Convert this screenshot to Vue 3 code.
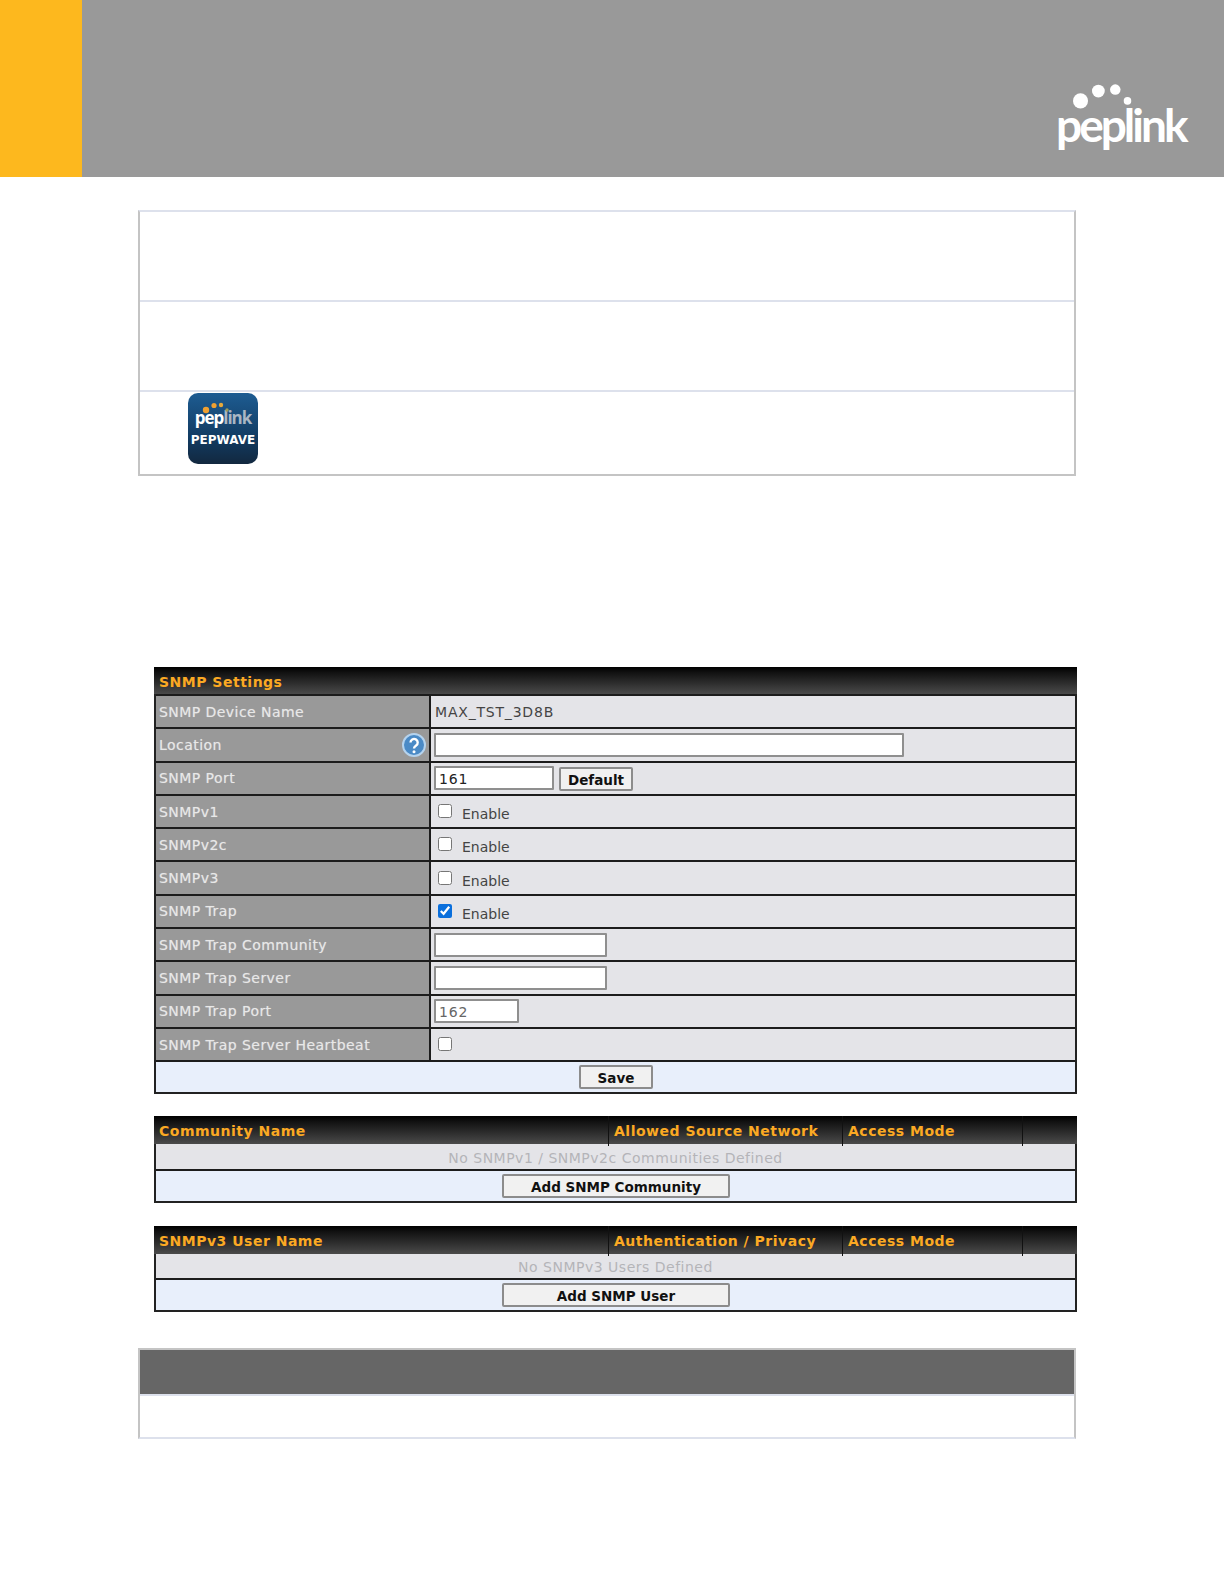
<script setup>
const rows = [
  { label: 'SNMP Device Name', kind: 'text', value: 'MAX_TST_3D8B' },
  { label: 'Location', kind: 'location' },
  { label: 'SNMP Port', kind: 'port' },
  { label: 'SNMPv1', kind: 'check', text: 'Enable' },
  { label: 'SNMPv2c', kind: 'check', text: 'Enable' },
  { label: 'SNMPv3', kind: 'check', text: 'Enable' },
  { label: 'SNMP Trap', kind: 'check', text: 'Enable', checked: true },
  { label: 'SNMP Trap Community', kind: 'input' },
  { label: 'SNMP Trap Server', kind: 'input' },
  { label: 'SNMP Trap Port', kind: 'trap' },
  { label: 'SNMP Trap Server Heartbeat', kind: 'check' }
]
const lists = [
  { head: ['Community Name', 'Allowed Source Network', 'Access Mode', ''], empty: 'No SNMPv1 / SNMPv2c Communities Defined', action: 'Add SNMP Community' },
  { head: ['SNMPv3 User Name', 'Authentication / Privacy', 'Access Mode', ''], empty: 'No SNMPv3 Users Defined', action: 'Add SNMP User' }
]
</script>

<template>
  <div class="page">
    <header class="banner">
      <div class="accent"></div>
      <div class="brand">
        <svg class="dots" viewBox="0 0 66 36" aria-hidden="true">
          <circle cx="8" cy="20" r="8" fill="#fff" />
          <circle cx="27" cy="9.500" r="6.800" fill="#fff" />
          <circle cx="45" cy="8" r="5.600" fill="#fff" />
          <circle cx="58" cy="20" r="4" fill="#fff" />
        </svg>
        <span class="wordmark">peplink</span>
      </div>
    </header>

    <main class="content">
      <section class="note-box">
        <div class="note-row"></div>
        <div class="note-row"></div>
        <div class="note-row last">
          <div class="app-icon">
            <svg class="app-dots" viewBox="0 0 28 14" aria-hidden="true">
              <circle cx="4" cy="9" r="3.200" fill="#f0a030" />
              <circle cx="12" cy="4.500" r="2.600" fill="#f0a030" />
              <circle cx="19" cy="4" r="2.200" fill="#e6a83a" />
              <circle cx="25" cy="9" r="1.700" fill="#9a9a5a" />
            </svg>
            <div class="app-name"><span class="app-pep">pep</span><span class="app-link">link</span></div>
            <div class="app-wave">PEPWAVE</div>
          </div>
        </div>
      </section>

      <section class="panel settings">
        <div class="bar">SNMP Settings</div>
        <div v-for="row in rows" :key="row.label" class="row">
          <div class="label">
            <span>{{ row.label }}</span>
            <svg v-if="row.kind === 'location'" class="help" viewBox="0 0 24 24" aria-hidden="true">
              <circle cx="12" cy="12" r="11" fill="#4a8ac6" stroke="#b5d3ee" stroke-width="2" />
              <path d="M8.500 9.500a3.600 3.600 0 1 1 5.600 3c-1.300.9-2.100 1.500-2.100 3" fill="none" stroke="#fff" stroke-width="2.400" />
              <circle cx="12" cy="18.700" r="1.500" fill="#fff" />
            </svg>
          </div>
          <div class="value">
            <span v-if="row.kind === 'text'" class="plain">{{ row.value }}</span>
            <input v-else-if="row.kind === 'location'" class="field wide" type="text" />
            <template v-else-if="row.kind === 'port'">
              <input class="field port" type="text" value="161" />
              <button class="btn default" type="button">Default</button>
            </template>
            <label v-else-if="row.kind === 'check'" class="check">
              <input type="checkbox" :checked="row.checked" />
              <span v-if="row.text">{{ row.text }}</span>
            </label>
            <input v-else-if="row.kind === 'input'" class="field medium" type="text" />
            <input v-else class="field small" type="text" value="162" />
          </div>
        </div>
        <div class="actions save-row"><button class="btn save" type="button">Save</button></div>
      </section>

      <section v-for="list in lists" :key="list.action" class="panel list">
        <div class="list-head">
          <div v-for="(h, i) in list.head" :key="i" class="list-cell">{{ h }}</div>
        </div>
        <div class="empty">{{ list.empty }}</div>
        <div class="actions add-row"><button class="btn add" type="button">{{ list.action }}</button></div>
      </section>

      <section class="foot-box">
        <div class="foot-head"></div>
        <div class="foot-body"></div>
      </section>
    </main>
  </div>
</template>

<style>
html, body { margin: 0; background: #fff; }
</style>

<style scoped>
.page {
  width: 1224px;
  height: 1584px;
  overflow: hidden;
  background: #fff;
  font-family: "DejaVu Sans", Verdana, sans-serif;
  font-size: 14px;
}
.banner {
  display: flex;
  justify-content: space-between;
  height: 177px;
  background: #999;
}
.accent { width: 82px; background: #fdb81e; }
.brand {
  display: flex;
  flex-direction: column;
  align-items: flex-start;
  width: 132px;
  margin: 82px 36px 0 0;
}
.dots { width: 62px; height: 34px; margin-left: 17px; }
.wordmark {
  margin-top: -18px;
  color: #fff;
  font-family: Lato, sans-serif;
  font-weight: 700;
  font-size: 46px;
  line-height: 54px;
  letter-spacing: -3px;
}
.content { padding: 33px 148px 0 138px; }
.note-box {
  display: flex;
  flex-direction: column;
  height: 266px;
  box-sizing: border-box;
  border: 2px solid #c4c4c4;
  border-top-color: #dde1ec;
}
.note-row {
  height: 90px;
  box-sizing: border-box;
  border-bottom: 2px solid #dde1ec;
}
.note-row.last {
  flex: 1;
  border-bottom: 0;
  padding: 1px 0 0 48px;
}
.app-icon {
  position: relative;
  width: 70px;
  height: 71px;
  border-radius: 10px;
  overflow: hidden;
  background: linear-gradient(#1d5c92, #123a60 65%, #12283f);
  text-align: center;
  color: #fff;
}
.app-dots { position: absolute; left: 14px; top: 8px; width: 28px; height: 14px; }
.app-name {
  margin-top: 14px;
  font-family: "Open Sans", sans-serif;
  font-weight: 700;
  font-size: 17px;
  line-height: 22px;
  letter-spacing: -1px;
}
.app-pep { color: #fff; }
.app-link { color: #a9b6c4; }
.app-wave {
  font-weight: 700;
  font-size: 12px;
  line-height: 22px;
}
.panel {
  box-sizing: border-box;
  margin: 0 -1px 0 16px;
  border: 2px solid #222;
  border-top: 0;
}
.settings { margin-top: 191px; height: 427px; display: flex; flex-direction: column; }
.bar, .list-head {
  margin: 0 -2px;
  background: linear-gradient(#000, #111 20%, #4a4a4a);
  color: #fba923;
  font-weight: 700;
  font-size: 14px;
  letter-spacing: 0.500px;
}
.bar {
  height: 27px;
  line-height: 30px;
  padding-left: 5px;
  box-sizing: border-box;
}
.row {
  display: grid;
  grid-template-columns: 275px 1fr;
  height: 33.300px;
  box-sizing: border-box;
  border-top: 2px solid #1c1c1c;
}
.label {
  display: flex;
  align-items: center;
  justify-content: space-between;
  padding: 0 8px 0 3px;
  background: #999;
  border-right: 2px solid #1c1c1c;
  color: #e8e8e8;
  letter-spacing: 0.450px;
  text-shadow: 0 0 1px rgba(232, 232, 232, 0.5);
}
.help { width: 24px; height: 24px; margin-right: -5px; }
.value {
  display: flex;
  align-items: center;
  gap: 5px;
  padding-left: 3px;
  background: #e4e4e8;
  color: #444;
}
.plain { padding-left: 1px; letter-spacing: 0.800px; }
.field {
  box-sizing: border-box;
  height: 24px;
  border: 2px solid #8f8f8f;
  border-radius: 1px;
  padding: 1px 3px 0;
  background: #fff;
  font: inherit;
  letter-spacing: 0.800px;
  color: #222;
  outline: 0;
}
.wide { width: 470px; }
.port { width: 120px; }
.medium { width: 173px; }
.small { width: 85px; color: #666; }
.check {
  display: flex;
  align-items: center;
  gap: 10px;
  padding: 2px 0 0 4px;
}
.check input { width: 14px; height: 14px; margin: 0 0 3px; accent-color: #0a6fdc; }
.check span { margin-top: 3px; }
.btn {
  box-sizing: border-box;
  height: 24px;
  padding: 1px 0 0;
  border: 2px solid #8c8c8c;
  border-radius: 2px;
  background: #f1f1f1;
  color: #111;
  font-family: inherit;
  font-weight: 700;
  font-size: 13.500px;
}
.default { width: 74px; margin-top: 2px; }
.actions {
  display: flex;
  justify-content: center;
  background: #e8effb;
  border-top: 2px solid #1c1c1c;
}
.save-row {
  flex: 1;
  align-items: center;
  padding-left: 1px;
}
.save { width: 74px; }
.list { margin-top: 23px; }
.settings + .list { margin-top: 22px; }
.list-head {
  display: grid;
  grid-template-columns: 455px 234px 180px 1fr;
  height: 28px;
  box-sizing: border-box;
}
.list-cell {
  padding-left: 5px;
  line-height: 30px;
  border-right: 1px solid #111;
}
.list-cell:last-child { border-right: 0; }
.empty {
  height: 25px;
  line-height: 29px;
  text-align: center;
  background: #e4e4e8;
  color: #b4b4b8;
  letter-spacing: 0.500px;
}
.list + .list .empty {
  height: 24px;
  line-height: 26px;
}
.add-row {
  height: 32px;
  box-sizing: border-box;
  padding: 3px 0 0 1px;
}
.add { width: 228px; height: 24px; }
.foot-box {
  margin-top: 36px;
  height: 91px;
  box-sizing: border-box;
  border: 2px solid #c4c4c4;
  border-bottom-color: #dde1ec;
}
.foot-head {
  height: 44px;
  background: #666;
  border-bottom: 2px solid #dde1ec;
}
</style>
